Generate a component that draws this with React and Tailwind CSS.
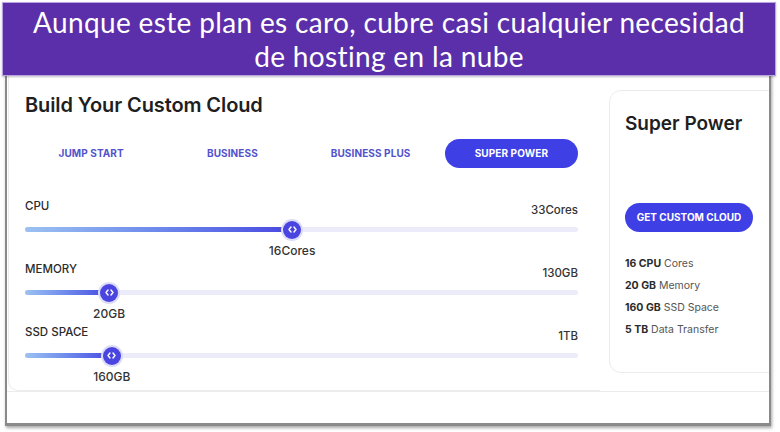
import React from "react";

const tabs = ["JUMP START", "BUSINESS", "BUSINESS PLUS", "SUPER POWER"];

const sliders = [
  { label: "CPU", max: "33Cores", value: "16Cores", pct: 48.3 },
  { label: "MEMORY", max: "130GB", value: "20GB", pct: 15.2 },
  { label: "SSD SPACE", max: "1TB", value: "160GB", pct: 15.7 },
];

const specs = [
  ["16 CPU", "Cores"],
  ["20 GB", "Memory"],
  ["160 GB", "SSD Space"],
  ["5 TB", "Data Transfer"],
];

function Thumb() {
  return (
    <div className="absolute top-1/2 -translate-x-1/2 -translate-y-1/2 w-[18px] h-[18px] rounded-full bg-[#4a45e0] ring-2 ring-[#dcdcf8] flex items-center justify-center">
      <svg width="9" height="7" viewBox="0 0 9 7" fill="none" stroke="white" strokeWidth="1.4" strokeLinecap="round" strokeLinejoin="round">
        <path d="M3 1L1 3.5L3 6" />
        <path d="M6 1L8 3.5L6 6" />
      </svg>
    </div>
  );
}

function Slider({ label, max, value, pct }) {
  return (
    <div className="h-[63px]">
      <div className="flex justify-between h-[14px] text-[11.5px] font-medium text-[#2b2b2b]">
        <span className="leading-[14px]">{label}</span>
        <span className="leading-[14px] translate-y-[4px] text-[#333]">{max}</span>
      </div>
      <div className="relative mt-[14px] h-[5px] rounded-full bg-[#ebebfa]">
        <div
          className="h-full rounded-full bg-gradient-to-r from-[#9cc2f2] to-[#4a45e0]"
          style={{ width: `${pct}%` }}
        />
        <div className="absolute inset-y-0" style={{ left: `${pct}%` }}>
          <Thumb />
        </div>
        <div
          className="absolute top-[15px] -translate-x-1/2 text-[12px] text-[#333] font-medium whitespace-nowrap"
          style={{ left: `${pct}%` }}
        >
          {value}
        </div>
      </div>
    </div>
  );
}

export default function App() {
  return (
    <div className="w-[780px] h-[432px] bg-white relative overflow-hidden font-['Inter',sans-serif]">
      {/* screenshot frame */}
      <div className="absolute left-[5px] top-[40px] w-[766px] h-[386px] border-l-2 border-r-2 border-b-[3px] border-[#8a8a8a] shadow-[1px_2px_3px_rgba(0,0,0,0.35)] bg-white overflow-hidden">
        <div className="flex items-start gap-[9px] pt-[40px] pl-[1px]">
          {/* left card */}
          <div className="shrink-0 w-[592px] h-[321px] -mt-[10px] rounded-bl-[10px] border-l border-t border-b border-[#ececec] pl-[16px] pr-[22px] pt-[19px]">
            <h1 className="text-[20px] font-semibold text-[#1f1f1f] tracking-[-0.1px]">Build Your Custom Cloud</h1>
            <div className="grid grid-cols-4 mt-[19px] items-center">
              {tabs.map((t, i) =>
                i === 3 ? (
                  <div key={t} className="h-[29px] ml-[5px] mr-0 rounded-full bg-[#3f3fe6] text-white text-[10px] font-bold flex items-center justify-center tracking-[0.1px]">
                    {t}
                  </div>
                ) : (
                  <div key={t} className={`text-center text-[10px] font-bold text-[#5252cc] tracking-[0.1px] ${i === 0 ? "pr-[6px]" : ""}`}>
                    {t}
                  </div>
                )
              )}
            </div>
            <div className="mt-[31px]">
              {sliders.map((s) => (
                <Slider key={s.label} {...s} />
              ))}
            </div>
          </div>
          {/* right card */}
          <div className="shrink-0 w-[200px] h-[283px] mt-[10px] rounded-[12px] border border-[#ececec] pl-[15px] pt-[19px]">
            <h2 className="text-[19px] font-semibold text-[#1f1f1f]">Super Power</h2>
            <div className="mt-[64px] w-[128px] h-[29px] rounded-full bg-[#3f3fe6] text-white text-[10px] font-bold flex items-center justify-center">
              GET CUSTOM CLOUD
            </div>
            <ul className="mt-[24px] flex flex-col gap-[7px] text-[10.5px]">
              {specs.map(([b, r]) => (
                <li key={b} className="leading-[15px]">
                  <span className="font-bold text-[#2b2b2b]">{b}</span>{" "}
                  <span className="text-[#555]">{r}</span>
                </li>
              ))}
            </ul>
          </div>
        </div>
        <div className="h-px bg-[#ececec]" />
      </div>
      {/* banner */}
      <div className="absolute left-[2px] top-[2px] w-[774px] h-[74px] bg-[#5b2fa9] border border-[#b9a6e0] shadow-[0_1px_2px_rgba(0,0,0,0.25)] flex flex-col items-center justify-center text-white font-['Lato',sans-serif] text-[28px] leading-[34px] tracking-[0.35px]">
        <div>Aunque este plan es caro, cubre casi cualquier necesidad</div>
        <div>de hosting en la nube</div>
      </div>
    </div>
  );
}
